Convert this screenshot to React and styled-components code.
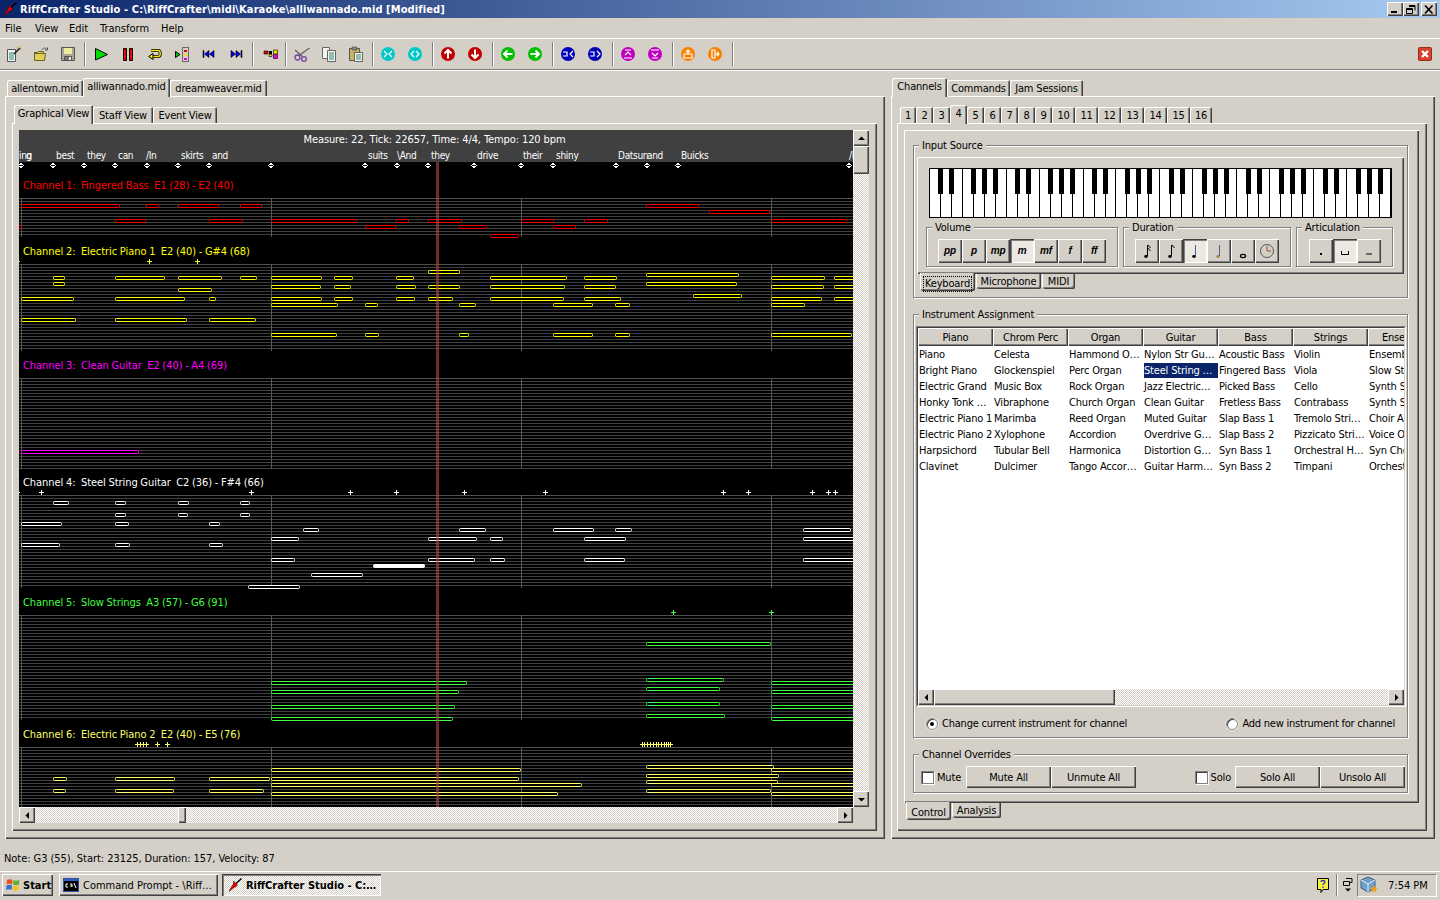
import React from "react";
import styled, { createGlobalStyle, css } from "styled-components";

const FACE = "#d4d0c8";
const UI_FONT = `"DejaVu Sans Condensed", "Liberation Sans", sans-serif`;

const GlobalStyle = createGlobalStyle`
  html, body { margin: 0; padding: 0; background: ${FACE}; overflow: hidden; }
  * { box-sizing: border-box; }
`;

const raised = css`
  background-color: ${FACE};
  box-shadow: inset 1px 1px 0 #fff, inset -1px -1px 0 #404040, inset -2px -2px 0 #808080;
`;
const dither = css`
  background-image: conic-gradient(#fff 25%, ${FACE} 0 50%, #fff 0 75%, ${FACE} 0);
  background-size: 2px 2px;
`;

const Screen = styled.div`
  width: 1440px;
  height: 900px;
  display: flex;
  flex-direction: column;
  background: ${FACE};
  color: #000;
  font: 11px/14px ${UI_FONT};
  letter-spacing: -0.18px;
  overflow: hidden;
`;

/* title bar */
const TitleBar = styled.div`
  height: 18px;
  flex: none;
  display: flex;
  align-items: center;
  padding: 0 3px 0 3px;
  background: linear-gradient(90deg, #0a246a, #a6caf0);
  color: #fff;
  font-weight: 700;
  letter-spacing: 0.1px;
`;
const TitleText = styled.span`
  margin-left: 3px;
  padding-top: 2px;
  flex: 1;
`;
const WinButtons = styled.div`
  display: flex;
`;
const WinButton = styled.div`
  ${raised}
  width: 16px;
  height: 14px;
  display: flex;
  align-items: center;
  justify-content: center;
  margin-left: ${(p) => p.$gap || 0}px;
`;

/* menu */
const MenuBar = styled.div`
  height: 20px;
  flex: none;
  display: flex;
  align-items: center;
  padding: 2px 0 0 5px;
  letter-spacing: 0;
`;
const MenuItem = styled.span`
  width: ${(p) => p.$w}px;
`;

/* toolbar */
const ToolBar = styled.div`
  height: 33px;
  flex: none;
  display: flex;
  align-items: center;
  border-top: 1px solid #fff;
  border-bottom: 1px solid #fff;
  box-shadow: inset 0 -1px 0 #808080;
  padding-bottom: 1px;
`;
const Tool = styled.div`
  width: 27px;
  height: 24px;
  display: flex;
  align-items: center;
  justify-content: center;
`;
const ToolSep = styled.div`
  width: 2px;
  height: 24px;
  border-left: 1px solid #808080;
  border-right: 1px solid #fff;
  margin: 0 ${(p) => p.$r}px 0 ${(p) => p.$l}px;
`;
const CloseTool = styled.div`
  margin-left: auto;
  margin-right: 8px;
  display: flex;
`;

/* tabs */
const Main = styled.div`
  flex: 1;
  display: flex;
  gap: 6px;
  padding: 7px 0 6px 5px;
  min-height: 0;
`;
const Column = styled.div`
  width: ${(p) => p.$w}px;
  display: flex;
  flex-direction: column;
`;
const TabStrip = styled.div`
  height: ${(p) => (p.$bottom ? 17 : 18)}px;
  display: flex;
  align-items: ${(p) => (p.$bottom ? "flex-start" : "flex-end")};
  padding-left: ${(p) => p.$pad}px;
  gap: ${(p) => p.$gap || 0}px;
  flex: none;
  position: relative;
  z-index: 2;
`;
const Tab = styled.div`
  width: ${(p) => p.$w}px;
  height: ${(p) => (p.$on ? 19 : 16)}px;
  margin-bottom: ${(p) => (p.$on ? -1 : 0)}px;
  display: flex;
  align-items: ${(p) => (p.$on ? "flex-start" : "center")};
  justify-content: center;
  padding-top: 2px;
  background: ${FACE};
  border-radius: 2px 2px 0 0;
  box-shadow: inset 1px 1px 0 #fff, inset -1px 0 0 #404040, inset -2px 0 0 #808080;
  white-space: nowrap;
`;
const BottomTab = styled.div`
  width: ${(p) => p.$w}px;
  height: ${(p) => (p.$on ? 18 : 15)}px;
  margin-top: ${(p) => (p.$on ? -1 : 0)}px;
  display: flex;
  align-items: center;
  justify-content: center;
  padding-top: ${(p) => (p.$on ? 4 : 1)}px;
  background: ${FACE};
  border-radius: 0 0 2px 2px;
  box-shadow: inset 1px 0 0 #fff, inset -1px -1px 0 #404040, inset -2px -2px 0 #808080;
`;
const FocusText = styled.span`
  outline: 1px dotted #000;
  padding: 0 1px;
`;
const Page = styled.div`
  ${raised}
  flex: 1;
  min-height: 0;
  display: flex;
  flex-direction: column;
  padding: ${(p) => p.$pad};
`;

/* piano roll */
const RollGrid = styled.div`
  display: grid;
  grid-template-columns: 834px 16px;
  grid-template-rows: 677px 16px;
`;
const Roll = styled.div`
  position: relative;
  background: #000;
  overflow: hidden;
`;
const RollHeader = styled.div`
  height: 32px;
  background: #404040;
  color: #fff;
`;
const RollTitle = styled.div`
  height: 18px;
  line-height: 20px;
  text-align: center;
  padding-right: 3px;
  letter-spacing: -0.1px;
`;
const LyricRow = styled.div`
  position: relative;
  height: 14px;
  font-size: 10px;
  letter-spacing: -0.3px;
`;
const Lyric = styled.span`
  position: absolute;
  left: ${(p) => p.$x - 19}px;
  top: 1px;
  white-space: pre;
`;
const ChannelLabel = styled.div`
  position: absolute;
  left: 4px;
  top: ${(p) => p.$y - 130 - 6}px;
  color: ${(p) => p.$color};
  white-space: pre;
  letter-spacing: -0.05px;
  word-spacing: -0.4px;
`;
const RollSvg = styled.svg`
  display: block;
`;

const ScrollV = styled.div`
  ${dither}
  display: flex;
  flex-direction: column;
`;
const ScrollH = styled.div`
  ${dither}
  display: flex;
  position: relative;
`;
const ScrollBtn = styled.div`
  ${raised}
  width: 16px;
  height: 16px;
  flex: none;
  display: flex;
  align-items: center;
  justify-content: center;
`;
const Track = styled.div`
  flex: 1;
`;
const ThumbV = styled.div`
  ${raised}
  width: 16px;
  height: 28px;
`;
const ThumbH = styled.div`
  ${raised}
  width: ${(p) => p.$w}px;
  height: 16px;
  margin-left: ${(p) => p.$x}px;
`;
const Corner = styled.div`
  background: ${FACE};
`;

/* group boxes */
const Group = styled.div`
  position: relative;
  border: 1px solid #808080;
  box-shadow: inset 1px 1px 0 #fff, 1px 1px 0 #fff;
  margin-top: ${(p) => p.$top || 0}px;
  height: ${(p) => p.$h}px;
  width: ${(p) => (p.$w ? p.$w + "px" : "auto")};
  padding: ${(p) => p.$pad || 0};
  flex: none;
`;
const Legend = styled.span`
  position: absolute;
  left: 5px;
  top: -7px;
  padding: 0 3px;
  background: ${FACE};
`;
const KeyPage = styled.div`
  ${raised}
  height: 117px;
  padding: 11px 0 0 9px;
`;
const KeyboardBox = styled.div`
  position: relative;
  width: 463px;
  height: 50px;
  margin-left: 3px;
  border: 1px solid #000;
  display: flex;
  background: #fff;
`;
const WhiteKey = styled.div`
  flex: 1;
  border-right: 1px solid #000;
  &:last-child { border-right: 0; }
`;
const BlackKey = styled.div`
  position: absolute;
  left: ${(p) => p.$i * 11 - 3}px;
  top: 0;
  width: 5px;
  height: 25px;
  background: #000;
`;
const KeyControls = styled.div`
  display: flex;
  gap: 5px;
  margin-top: 9px;
`;
const BtnRow = styled.div`
  display: flex;
`;
const KeyBtn = styled.div`
  ${raised}
  width: 24px;
  height: 24px;
  display: flex;
  align-items: center;
  justify-content: center;
  font: italic 700 10px/1 "Liberation Sans", sans-serif;
  ${(p) => p.$on && css`
    background: #ece9e3;
    box-shadow: inset 1px 1px 0 #404040, inset 2px 2px 0 #808080, inset -1px -1px 0 #fff;
  `}
`;

/* instrument list */
const ListBox = styled.div`
  height: 381px;
  border: 1px solid;
  border-color: #808080 #fff #fff #808080;
`;
const ListInner = styled.div`
  height: 100%;
  border: 1px solid;
  border-color: #404040 ${FACE} ${FACE} #404040;
  background: #fff;
  display: flex;
  flex-direction: column;
`;
const ListColumns = styled.div`
  flex: 1;
  display: flex;
  overflow: hidden;
`;
const ListColumn = styled.div`
  width: 75px;
  flex: none;
`;
const ListHead = styled.div`
  ${raised}
  height: 18px;
  line-height: 20px;
  text-align: center;
  white-space: nowrap;
  overflow: hidden;
`;
const ListCell = styled.div`
  height: 16px;
  line-height: 18px;
  padding-left: 1px;
  white-space: nowrap;
  overflow: hidden;
  ${(p) => p.$on && css`
    background: #0a246a;
    color: #fff;
    margin: 1px 0 0 1px;
    padding-left: 0;
    height: 15px;
    line-height: 16px;
  `}
`;
const ListScroll = styled.div`
  ${dither}
  display: flex;
  height: 16px;
  flex: none;
`;
const RadioRow = styled.div`
  display: flex;
  justify-content: space-between;
  padding: 10px 11px 0 10px;
  letter-spacing: -0.22px;
`;
const RadioLabel = styled.label`
  display: flex;
  align-items: center;
  gap: 4px;
`;
const Radio = styled.span`
  width: 12px;
  height: 12px;
  border-radius: 50%;
  background: #fff;
  border: 1px solid #808080;
  box-shadow: inset 1px 1px 0 #404040, 0 0 0 0.5px #fff;
  display: flex;
  align-items: center;
  justify-content: center;
  &::after {
    content: "";
    width: 4px;
    height: 4px;
    border-radius: 50%;
    background: ${(p) => (p.$on ? "#000" : "transparent")};
  }
`;
const OverrideRow = styled.div`
  display: flex;
  align-items: center;
  padding: 11px 2px 0 7px;
`;
const Check = styled.span`
  width: 13px;
  height: 13px;
  background: #fff;
  border: 1px solid #808080;
  box-shadow: inset 1px 1px 0 #404040, 1px 1px 0 #fff;
  margin-right: 3px;
  margin-left: ${(p) => (p.$push ? "auto" : "0")};
`;
const Label = styled.span`
  padding-top: 2px;
`;
const PushBtn = styled.div`
  ${raised}
  width: 85px;
  height: 22px;
  display: flex;
  align-items: center;
  justify-content: center;
  padding-top: 2px;
  margin-left: ${(p) => p.$ml || 0}px;
`;

/* status + taskbar */
const StatusBar = styled.div`
  height: 26px;
  flex: none;
  display: flex;
  align-items: center;
  padding: 2px 0 0 4px;
  letter-spacing: -0.05px;
`;
const TaskBar = styled.div`
  height: 29px;
  flex: none;
  border-top: 1px solid #fff;
  display: flex;
  align-items: flex-start;
  padding: 2px 3px 0 2px;
  letter-spacing: 0;
`;
const StartBtn = styled.div`
  ${raised}
  width: 51px;
  height: 22px;
  display: flex;
  align-items: center;
  gap: 2px;
  padding-left: 3px;
  font-weight: 700;
`;
const TaskBtn = styled.div`
  width: 159px;
  height: 22px;
  margin-left: ${(p) => p.$ml}px;
  display: flex;
  align-items: center;
  gap: 4px;
  padding-left: 4px;
  white-space: nowrap;
  ${(p) => (p.$on ? css`
    ${dither}
    box-shadow: inset 1px 1px 0 #404040, inset 2px 2px 0 #808080, inset -1px -1px 0 #fff;
    font-weight: 700;
    padding-left: 6px;
  ` : raised)}
`;
const Tray = styled.div`
  margin-left: auto;
  display: flex;
  align-items: center;
  height: 22px;
`;
const TraySep = styled.div`
  width: 2px;
  height: 22px;
  border-left: 1px solid #808080;
  border-right: 1px solid #fff;
  margin: 0 4px 0 5px;
`;
const Clock = styled.div`
  width: 80px;
  height: 23px;
  display: flex;
  align-items: center;
  margin: 0 0 0 3px;
  padding-left: 2px;
  gap: 10px;
  border: 1px solid;
  border-color: #808080 #fff #fff #808080;
`;

/* icons */
const Guitar = () => (
  <svg width="14" height="14" viewBox="0 0 14 14">
    <path d="M13.5 .5L8 5.5" stroke="#000" strokeWidth="1.4" />
    <path d="M5.5 3 L9.5 7 L8 8.5 L6 9.5 L1 13.5 L4 8 L5.5 6 Z" fill="#e00000" stroke="#500" strokeWidth="0.5" />
  </svg>
);
const Tri = ({ dir }) => {
  const d = { up: "M1 6 L4.5 2.5 L8 6Z", down: "M1 3 L4.5 6.5 L8 3Z", left: "M6 1 L2.5 4.5 L6 8Z", right: "M3 1 L6.5 4.5 L3 8Z" }[dir];
  return (
    <svg width="9" height="9" viewBox="0 0 9 9">
      <path d={d} fill="#000" />
    </svg>
  );
};
const Svg16 = ({ children }) => (
  <svg width="16" height="16" viewBox="0 0 16 16">
    {children}
  </svg>
);
const DocLines = () => <path d="M3 7h5M3 9h5M3 11h5M3 13h5" stroke="#2a8a7a" />;
const IconNew = () => (
  <Svg16>
    <path d="M1.5 3.5h8v12h-8z" fill="#f4f4ec" stroke="#555" />
    <DocLines />
    <path d="M8 8 L14 2" stroke="#222" strokeWidth="1.6" />
    <path d="M12 1h1M15 3v1M15 0v1M10 2h1" stroke="#e0a000" />
  </Svg16>
);
const IconOpen = () => (
  <Svg16>
    <path d="M1.5 6.5h3l1-1h5v2h-9z M1.5 7.5h11l-1 7h-10z" fill="#e0cf55" stroke="#6a6420" />
    <path d="M9 4 C10 1.5 13 1.5 14 3.5 M14.5 1.5 v2.5 h-2.5" fill="none" stroke="#555" />
  </Svg16>
);
const IconSave = () => (
  <Svg16>
    <path d="M1.5 1.5h13v13h-13z" fill="#a8a89a" stroke="#555" />
    <path d="M4 2h8v6H4z" fill="#ecec9c" />
    <path d="M4.5 10.5h7v4h-7z" fill="#777" stroke="#555" />
    <path d="M9 11h2v3H9z" fill="#eee" />
  </Svg16>
);
const IconPlay = () => (
  <Svg16>
    <path d="M2.5 2.5 L14.5 8.5 L2.5 14Z" fill="#00e000" stroke="#000" />
  </Svg16>
);
const IconPause = () => (
  <Svg16>
    <path d="M3.5 2.5h3v12h-3zM9.5 2.5h3v12h-3z" fill="#f00000" stroke="#000" />
  </Svg16>
);
const IconLoop = () => (
  <Svg16>
    <path d="M4 4.5h7c3 0 3 6 0 6H5" fill="none" stroke="#000" strokeWidth="3" />
    <path d="M4 4.5h7c3 0 3 6 0 6H5" fill="none" stroke="#f8e800" strokeWidth="1.4" />
    <path d="M6 7.5 L1.5 10.5 L6 13.5Z" fill="#f8e800" stroke="#000" />
  </Svg16>
);
const IconStep = () => (
  <Svg16>
    <path d="M1.5 5.5 L6 8.5 L1.5 11.5Z" fill="#00d000" stroke="#000" />
    <path d="M8.5 1.5h6v14h-6z" fill="none" stroke="#000" strokeDasharray="1 1" />
    <path d="M10 4h3v2h-3z" fill="#e00000" />
    <path d="M10 8h3v2h-3z" fill="#f0e000" />
    <path d="M10 12h3v2h-3z" fill="#e000e0" />
  </Svg16>
);
const IconRew = () => (
  <Svg16>
    <path d="M3 4.5v7H2v-7zM8 4.5v7L3.5 8zM13 4.5v7L8.5 8z" fill="#0000e0" stroke="#000" strokeWidth="0.6" />
  </Svg16>
);
const IconFwd = () => (
  <Svg16>
    <path d="M3 4.5v7L7.5 8zM8 4.5v7L12.5 8zM13 4.5v7h1v-7z" fill="#0000e0" stroke="#000" strokeWidth="0.6" />
  </Svg16>
);
const IconBlocks = () => (
  <Svg16>
    <path d="M1 5h4v3H1z" fill="#e00000" stroke="#000" strokeWidth="0.6" />
    <path d="M6 5h3v3H6z" fill="#000" />
    <path d="M10.5 4h4v4h-4z" fill="#f0e000" stroke="#000" strokeWidth="0.6" />
    <path d="M10.5 8.5h4v4h-4z" fill="#f000f0" stroke="#000" strokeWidth="0.6" />
    <path d="M6 8.5h3v2H6z" fill="#f0e000" stroke="#000" strokeWidth="0.6" />
  </Svg16>
);
const IconCut = () => (
  <Svg16>
    <path d="M15.5 2 L5 9.5 M1 4 L8.5 10.5" stroke="#606060" strokeWidth="1.2" />
    <circle cx="3.5" cy="11.5" r="2.5" fill="none" stroke="#7040a0" strokeWidth="1.3" />
    <circle cx="10" cy="13" r="2.3" fill="none" stroke="#7040a0" strokeWidth="1.3" />
  </Svg16>
);
const IconCopy = () => (
  <Svg16>
    <path d="M1.5 1.5h7v11h-7z" fill="#f4f4ec" stroke="#666" />
    <path d="M6.5 4.5h8v11h-8z" fill="#f4f4ec" stroke="#666" />
    <path d="M8 7h5M8 9h5M8 11h5M8 13h5" stroke="#2a8a7a" />
  </Svg16>
);
const IconPaste = () => (
  <Svg16>
    <path d="M1.5 2.5h10v12h-10z" fill="#c8b460" stroke="#555" />
    <path d="M4 1h5v3H4z" fill="#888" stroke="#444" strokeWidth="0.6" />
    <path d="M6.5 6.5h8v9h-8z" fill="#f4f4ec" stroke="#666" />
    <path d="M8 9h5M8 11h5M8 13h5" stroke="#2a8a7a" />
  </Svg16>
);
const IconClose = () => (
  <svg width="14" height="14" viewBox="0 0 14 14">
    <rect x="0.5" y="0.5" width="13" height="13" rx="1" fill="#d84030" stroke="#a02818" />
    <path d="M4 4 L10 10 M10 4 L4 10" stroke="#fff" strokeWidth="2.4" />
  </svg>
);
const Round = ({ color, d, w = 1.2 }) => (
  <svg width="14" height="14" viewBox="0 0 14 14">
    <circle cx="7" cy="7" r="7" fill={color} />
    <path d={d} fill="none" stroke="#fff" strokeWidth={w} />
  </svg>
);
const Note = ({ stem = "#000", flags = 0, open, head = "#000" }) => (
  <svg width="16" height="18" viewBox="0 0 16 18">
    {open ? (
      <ellipse cx="8" cy="14" rx="2.6" ry="1.6" fill="none" stroke="#000" strokeWidth="1.3" />
    ) : (
      <ellipse cx="7" cy="14.5" rx="1.8" ry="1.4" fill={head} />
    )}
    {stem !== "none" && <path d="M8.5 14V3" stroke={stem} />}
    {flags > 0 && <path d="M9 3 L11.5 6" stroke="#000" />}
    {flags > 1 && <path d="M9 6 L11.5 9" stroke="#000" />}
  </svg>
);
const IconClockFace = () => (
  <svg width="16" height="16" viewBox="0 0 16 16">
    <circle cx="8" cy="8" r="6.5" fill="none" stroke="#555" />
    <path d="M8 3v5h4" stroke="#a05030" fill="none" />
  </svg>
);
const WinFlag = () => (
  <svg width="16" height="16" viewBox="0 0 16 16">
    <path d="M2 3 Q5 1.5 7.5 3 L7 7.5 Q4.5 6 1.5 7.5Z" fill="#e85020" />
    <path d="M8.5 3 Q11 4.5 14.5 3 L14 7.5 Q11 9 8 7.5Z" fill="#60b030" />
    <path d="M1.5 8.5 Q4.5 7 7 8.5 L6.5 13 Q4 11.5 1 13Z" fill="#3070d0" />
    <path d="M8 8.5 Q11 10 14 8.5 L13.5 13 Q10.5 14.5 7.5 13Z" fill="#f8c020" />
  </svg>
);
const CmdIcon = () => (
  <svg width="16" height="14" viewBox="0 0 16 14">
    <rect x="0.5" y="0.5" width="15" height="13" fill="#000" stroke="#3050a0" />
    <path d="M1 1h14v2H1z" fill="#3060c0" />
    <path d="M3 6h2M3 9h2M3 6v3M7 6h2v3M7 8h2M11 5l2 5" stroke="#fff" fill="none" />
  </svg>
);
const HelpIcon = () => (
  <svg width="15" height="17" viewBox="0 0 15 17">
    <path d="M1.5 1.5h11v11H7l-2 3v-3H1.5z" fill="#f8f040" stroke="#000" />
    <path d="M5 5c0-2 4-2 4 0 0 1-2 1.5-2 3M7 9.5v1.5" fill="none" stroke="#3030c0" strokeWidth="1.3" />
  </svg>
);
const RestoreIcon = () => (
  <svg width="12" height="16" viewBox="0 0 12 16">
    <path d="M4 1.5h6v4H8M1.5 4.5h6v4h-6z" fill="none" stroke="#000" />
    <path d="M3 11.5h6L6 14.5Z" fill="#000" />
  </svg>
);
const CubeIcon = () => (
  <svg width="18" height="18" viewBox="0 0 18 18">
    <path d="M8 1l7 3v8l-7 4-7-4V4z" fill="#70a0c8" stroke="#406080" />
    <path d="M1 4l7 4 7-4M8 8v8" fill="none" stroke="#e0f0ff" />
    <path d="M14 9l1.2 2.6 2.6.3-2 1.8.6 2.7-2.4-1.4-2.4 1.4.6-2.7-2-1.8 2.6-.3z" fill="#f0a020" />
  </svg>
);

const toolGroups = [
  { l: 0, r: 0, tools: [<IconNew />, <IconOpen />, <IconSave />] },
  { l: 3, r: 1, tools: [<IconPlay />, <IconPause />, <IconLoop />, <IconStep />, <IconRew />, <IconFwd />] },
  { l: 3, r: 3, tools: [<IconBlocks />] },
  { l: 1, r: 1, tools: [<IconCut />, <IconCopy />, <IconPaste />] },
  { l: 3, r: 0, tools: [
    <Round color="#00c8c8" d="M3 4l3 3-3 3M11 4L8 7l3 3" />,
    <Round color="#00c8c8" d="M6 4L3 7l3 3M8 4l3 3-3 3" />,
  ] },
  { l: 4, r: 0, tools: [
    <Round color="#c00000" d="M7 11.5V3M3.5 6.5L7 3l3.5 3.5" w={2} />,
    <Round color="#c00000" d="M7 2.5V11M3.5 7.5L7 11l3.5-3.5" w={2} />,
  ] },
  { l: 4, r: 0, tools: [
    <Round color="#00c000" d="M11.5 7H3M6.5 3.5L3 7l3.5 3.5" w={2} />,
    <Round color="#00c000" d="M2.5 7H11M7.5 3.5L11 7l-3.5 3.5" w={2} />,
  ] },
  { l: 4, r: 0, tools: [
    <Round color="#0000b8" d="M2 5h4v4H2M12 4L9 7l3 3" />,
    <Round color="#0000b8" d="M2 5h4v4H2M9 4l3 3-3 3" />,
  ] },
  { l: 4, r: 0, tools: [
    <Round color="#c000c0" d="M4 3h6M4 8l3-3 3 3M3 11h8" />,
    <Round color="#c000c0" d="M3 3h8M4 6l3 3 3-3M4 11h6" />,
  ] },
  { l: 4, r: 0, tools: [
    <Round color="#f88000" d="M3 7h8v4H3zM7 7V3M5 5l2-2 2 2" />,
    <Round color="#f88000" d="M4 3h3v8H4zM7 7h4M9 5l2 2-2 2" />,
  ] },
];

const lyrics = [
  ["ing", 19], ["g", 26], ["best", 56], ["they", 87], ["can", 118], ["/In", 146], ["skirts", 181], ["and", 212],
  ["suits", 368], ["\\And", 397], ["they", 431], ["drive", 477], ["their", 523], ["shiny", 556],
  ["Datsun", 618], ["and", 647], ["Buicks", 681], ["/I", 849],
];
const diamonds = [21, 53, 84, 115, 147, 178, 209, 271, 365, 397, 428, 474, 521, 553, 616, 647, 678, 849];

const channels = [
  {
    label: "Channel 1:  Fingered Bass  E1 (28) - E2 (40)", y: 185, color: "#ff0000", top: 198, bottom: 237, marks: [],
    notes: [
      [204, 21, 119], [204, 146, 158], [204, 178, 218], [204, 240, 261], [204, 646, 698],
      [210, 709, 769],
      [219, 115, 145], [219, 209, 242], [219, 271, 356], [219, 396, 408], [219, 428, 461], [219, 521, 553], [219, 584, 607], [219, 771, 846],
      [225, 15, 21], [225, 365, 395], [225, 459, 486], [225, 553, 575],
      [234, 490, 518],
    ],
  },
  {
    label: "Channel 2:  Electric Piano 1  E2 (40) - G#4 (68)", y: 251, color: "#ffff00", top: 264, bottom: 351, marks: [17, 149, 197],
    notes: [
      [270, 428, 459],
      [273, 646, 738],
      [276, 53, 64], [276, 115, 164], [276, 178, 221], [276, 240, 256], [276, 271, 321], [276, 334, 352], [276, 396, 413],
      [276, 490, 566], [276, 584, 616], [276, 771, 824], [276, 834, 860],
      [282, 53, 64], [282, 646, 736],
      [285, 271, 320], [285, 334, 350], [285, 396, 415], [285, 428, 459], [285, 490, 564], [285, 584, 615], [285, 771, 823], [285, 834, 860],
      [288, 178, 211],
      [294, 693, 741],
      [297, 21, 73], [297, 115, 184], [297, 209, 215], [297, 271, 321], [297, 334, 352], [297, 396, 414], [297, 428, 452],
      [297, 490, 563], [297, 584, 620], [297, 771, 821], [297, 834, 860],
      [303, 271, 337], [303, 365, 377], [303, 459, 475], [303, 553, 592], [303, 615, 629], [303, 771, 804],
      [318, 21, 75], [318, 115, 186], [318, 209, 255],
      [333, 271, 336], [333, 365, 378], [333, 459, 468], [333, 553, 592], [333, 615, 629], [333, 771, 851],
    ],
  },
  {
    label: "Channel 3:  Clean Guitar  E2 (40) - A4 (69)", y: 365, color: "#ff00ff", top: 378, bottom: 469, marks: [],
    notes: [[450, 21, 138]],
  },
  {
    label: "Channel 4:  Steel String Guitar  C2 (36) - F#4 (66)", y: 482, color: "#ffffff", top: 495, bottom: 588,
    marks: [17, 41, 251, 350, 396, 464, 545, 723, 748, 812, 828, 835],
    notes: [
      [501, 53, 68], [501, 115, 125], [501, 178, 188], [501, 240, 249],
      [513, 115, 125], [513, 178, 187], [513, 240, 249],
      [522, 21, 61], [522, 115, 128], [522, 209, 219],
      [528, 303, 318], [528, 459, 485], [528, 553, 593], [528, 615, 631], [528, 803, 850],
      [537, 271, 298], [537, 428, 476], [537, 490, 502], [537, 584, 625], [537, 803, 860],
      [543, 21, 59], [543, 115, 129], [543, 209, 222],
      [558, 271, 294], [558, 428, 474], [558, 490, 504], [558, 584, 624], [558, 803, 860],
      [573, 311, 362],
      [585, 248, 299],
    ],
    solid: [[564, 373, 424]],
  },
  {
    label: "Channel 5:  Slow Strings  A3 (57) - G6 (91)", y: 602, color: "#40ff40", top: 615, bottom: 720, marks: [673, 771],
    notes: [
      [642, 646, 770],
      [678, 646, 723], [681, 271, 466], [681, 771, 860],
      [687, 646, 719], [690, 271, 458], [690, 771, 860],
      [702, 646, 719], [705, 271, 454], [705, 771, 860],
      [714, 646, 724], [717, 271, 452], [717, 771, 860],
    ],
  },
  {
    label: "Channel 6:  Electric Piano 2  E2 (40) - E5 (76)", y: 734, color: "#ffff66", top: 747, bottom: 807,
    marks: [137, 140, 143, 146, 157, 167, 642, 644, 647, 650, 653, 656, 658, 661, 664, 666, 668, 670],
    notes: [
      [765, 646, 773],
      [768, 271, 520], [768, 771, 860],
      [774, 646, 778],
      [777, 53, 66], [777, 115, 174], [777, 209, 269], [777, 271, 518],
      [780, 646, 777],
      [783, 271, 581], [783, 771, 860],
      [789, 53, 65], [789, 115, 173], [789, 209, 263], [789, 646, 770],
      [792, 271, 557], [792, 771, 860],
    ],
  },
];

const range = (a, b, step) => {
  const out = [];
  for (let v = a; v < b; v += step) out.push(v);
  return out;
};

const PianoRollDrawing = () => (
  <RollSvg width="834" height="645" viewBox="19 162 834 645" shapeRendering="crispEdges">
    {diamonds.map((x) => (
      <path key={x} d={`M${x} 163.5 L${x + 2.5} 165.5 L${x} 167.5 L${x - 2.5} 165.5Z`} fill="#000" stroke="#fff" />
    ))}
    {channels.map((ch) => (
      <g key={ch.y}>
        {range(ch.top, ch.bottom, 3).map((y) => (
          <path key={y} d={`M19 ${y + 0.5}H853`} stroke={y === ch.top ? "#505050" : "#404040"} />
        ))}
        {[21, 271, 521, 771].map((x) => (
          <path key={x} d={`M${x + 0.5} ${ch.top}V${ch.bottom}`} stroke="#585858" />
        ))}
        {ch.notes.map(([y, a, b]) => (
          <rect key={`${y}-${a}`} x={a + 0.5} y={y + 0.5} width={b - a} height={3} rx="1" fill="#000" stroke={ch.color} shapeRendering="auto" />
        ))}
        {(ch.solid || []).map(([y, a, b]) => (
          <rect key={a} x={a + 0.5} y={y + 0.5} width={b - a} height={3} rx="1" fill={ch.color} stroke={ch.color} shapeRendering="auto" />
        ))}
        {ch.marks.map((x) => (
          <path key={x} d={`M${x - 2} ${ch.top - 2.5}H${x + 3}M${x + 0.5} ${ch.top - 5}V${ch.top}`} stroke={ch.color} />
        ))}
      </g>
    ))}
    <rect x="436" y="162" width="3" height="645" fill="#b04848" opacity="0.62" />
  </RollSvg>
);

const fileTabs = [["allentown.mid", 76], ["alliwannado.mid", 87, true], ["dreamweaver.mid", 97]];
const viewTabs = [["Graphical View", 79, true], ["Staff View", 60], ["Event View", 64]];
const rightTabs = [["Channels", 55, true], ["Commands", 63], ["Jam Sessions", 73]];
const channelTabs = [
  ["1", 16], ["2", 17], ["3", 17], ["4", 17, true], ["5", 17], ["6", 17], ["7", 17], ["8", 17], ["9", 17],
  ["10", 23], ["11", 23], ["12", 23], ["13", 23], ["14", 23], ["15", 23], ["16", 22],
];

const instruments = [
  ["Piano", ["Piano", "Bright Piano", "Electric Grand", "Honky Tonk …", "Electric Piano 1", "Electric Piano 2", "Harpsichord", "Clavinet"]],
  ["Chrom Perc", ["Celesta", "Glockenspiel", "Music Box", "Vibraphone", "Marimba", "Xylophone", "Tubular Bell", "Dulcimer"]],
  ["Organ", ["Hammond O…", "Perc Organ", "Rock Organ", "Church Organ", "Reed Organ", "Accordion", "Harmonica", "Tango Accor…"]],
  ["Guitar", ["Nylon Str Gu…", "Steel String …", "Jazz Electric…", "Clean Guitar", "Muted Guitar", "Overdrive G…", "Distortion G…", "Guitar Harm…"]],
  ["Bass", ["Acoustic Bass", "Fingered Bass", "Picked Bass", "Fretless Bass", "Slap Bass 1", "Slap Bass 2", "Syn Bass 1", "Syn Bass 2"]],
  ["Strings", ["Violin", "Viola", "Cello", "Contrabass", "Tremolo Stri…", "Pizzicato Stri…", "Orchestral H…", "Timpani"]],
  ["Ensemble", ["Ensemble", "Slow Strings", "Synth Strings", "Synth Strings", "Choir Aahs", "Voice Oohs", "Syn Choir", "Orchestra Hit"]],
];

const blackKeys = range(1, 42, 1).filter((i) => i % 7 !== 0 && i % 7 !== 3);

export default function App() {
  return (
    <Screen>
      <GlobalStyle />
      <TitleBar>
        <Guitar />
        <TitleText>RiffCrafter Studio - C:\RiffCrafter\midi\Karaoke\alliwannado.mid [Modified]</TitleText>
        <WinButtons>
          <WinButton>
            <svg width="10" height="8" viewBox="0 0 10 8"><path d="M1 6h6v2H1z" fill="#000" /></svg>
          </WinButton>
          <WinButton>
            <svg width="10" height="9" viewBox="0 0 10 9"><path d="M3 .5h6v5M3 1.5h6M.5 3.5h6v5h-6zM.5 4.5h6" fill="none" stroke="#000" /></svg>
          </WinButton>
          <WinButton $gap={2}>
            <svg width="10" height="9" viewBox="0 0 10 9"><path d="M1 0.5L8.5 8.5M8.5 .5L1 8.5" stroke="#000" strokeWidth="1.6" /></svg>
          </WinButton>
        </WinButtons>
      </TitleBar>

      <MenuBar>
        <MenuItem $w={30}>File</MenuItem>
        <MenuItem $w={34}>View</MenuItem>
        <MenuItem $w={31}>Edit</MenuItem>
        <MenuItem $w={61}>Transform</MenuItem>
        <MenuItem $w={30}>Help</MenuItem>
      </MenuBar>

      <ToolBar>
        {toolGroups.map((g, i) => (
          <React.Fragment key={i}>
            {g.tools.map((t, j) => (
              <Tool key={j}>{t}</Tool>
            ))}
            <ToolSep $l={toolGroups[i + 1] ? toolGroups[i + 1].l : 4} $r={toolGroups[i + 1] ? toolGroups[i + 1].r : 0} />
          </React.Fragment>
        ))}
        <CloseTool>
          <IconClose />
        </CloseTool>
      </ToolBar>

      <Main>
        <Column $w={880}>
          <TabStrip $pad={2}>
            {fileTabs.map(([t, w, on]) => (
              <Tab key={t} $w={w} $on={on}>{t}</Tab>
            ))}
          </TabStrip>
          <Page $pad="9px 8px 8px 7px">
            <TabStrip $pad={2}>
              {viewTabs.map(([t, w, on]) => (
                <Tab key={t} $w={w} $on={on}>{t}</Tab>
              ))}
            </TabStrip>
            <Page $pad="7px 8px 8px 7px">
              <RollGrid>
                <Roll>
                  <RollHeader>
                    <RollTitle>Measure: 22, Tick: 22657, Time: 4/4, Tempo: 120 bpm</RollTitle>
                    <LyricRow>
                      {lyrics.map(([t, x]) => (
                        <Lyric key={t + x} $x={x}>{t}</Lyric>
                      ))}
                    </LyricRow>
                  </RollHeader>
                  <PianoRollDrawing />
                  {channels.map((ch) => (
                    <ChannelLabel key={ch.y} $y={ch.y} $color={ch.color}>{ch.label}</ChannelLabel>
                  ))}
                </Roll>
                <ScrollV>
                  <ScrollBtn><Tri dir="up" /></ScrollBtn>
                  <ThumbV />
                  <Track />
                  <ScrollBtn><Tri dir="down" /></ScrollBtn>
                </ScrollV>
                <ScrollH>
                  <ScrollBtn><Tri dir="left" /></ScrollBtn>
                  <ThumbH $x={143} $w={8} />
                  <Track />
                  <ScrollBtn><Tri dir="right" /></ScrollBtn>
                </ScrollH>
                <Corner />
              </RollGrid>
            </Page>
          </Page>
        </Column>

        <Column $w={544}>
          <TabStrip $pad={1}>
            {rightTabs.map(([t, w, on]) => (
              <Tab key={t} $w={w} $on={on}>{t}</Tab>
            ))}
          </TabStrip>
          <Page $pad="9px 8px 8px 6px">
            <TabStrip $pad={3}>
              {channelTabs.map(([t, w, on]) => (
                <Tab key={t} $w={w} $on={on}>{t}</Tab>
              ))}
            </TabStrip>
            <Page $pad="7px 8px 11px 7px">
              <Page $pad="15px 11px 0 9px">
                <Group $h={153} $pad="11px 3px 0 3px">
                  <Legend>Input Source</Legend>
                  <KeyPage>
                    <KeyboardBox>
                      {range(0, 42, 1).map((i) => (
                        <WhiteKey key={i} />
                      ))}
                      {blackKeys.map((i) => (
                        <BlackKey key={i} $i={i} />
                      ))}
                    </KeyboardBox>
                    <KeyControls>
                      <Group $w={192} $h={40} $pad="11px 0 0 11px">
                        <Legend>Volume</Legend>
                        <BtnRow>
                          {["pp", "p", "mp", "m", "mf", "f", "ff"].map((v) => (
                            <KeyBtn key={v} $on={v === "m"}>{v}</KeyBtn>
                          ))}
                        </BtnRow>
                      </Group>
                      <Group $w={168} $h={40} $pad="11px 0 0 11px">
                        <Legend>Duration</Legend>
                        <BtnRow>
                          <KeyBtn><Note flags={2} /></KeyBtn>
                          <KeyBtn><Note flags={1} /></KeyBtn>
                          <KeyBtn $on><Note stem="#4060a0" /></KeyBtn>
                          <KeyBtn><Note stem="#4060a0" head="#a09040" /></KeyBtn>
                          <KeyBtn><Note stem="none" open /></KeyBtn>
                          <KeyBtn><IconClockFace /></KeyBtn>
                        </BtnRow>
                      </Group>
                      <Group $w={97} $h={40} $pad="11px 0 0 12px">
                        <Legend>Articulation</Legend>
                        <BtnRow>
                          <KeyBtn>
                            <svg width="8" height="10" viewBox="0 0 8 10"><path d="M3 7h2v2H3z" fill="#000" /></svg>
                          </KeyBtn>
                          <KeyBtn $on>
                            <svg width="8" height="10" viewBox="0 0 8 10"><path d="M.5 5v3.5h7V5" fill="none" stroke="#000" /></svg>
                          </KeyBtn>
                          <KeyBtn>
                            <svg width="8" height="10" viewBox="0 0 8 10"><path d="M1 8h6" stroke="#000" /></svg>
                          </KeyBtn>
                        </BtnRow>
                      </Group>
                    </KeyControls>
                  </KeyPage>
                  <TabStrip $bottom $pad={3} $gap={1}>
                    <BottomTab $w={55} $on><FocusText>Keyboard</FocusText></BottomTab>
                    <BottomTab $w={65}>Microphone</BottomTab>
                    <BottomTab $w={33}>MIDI</BottomTab>
                  </TabStrip>
                </Group>

                <Group $top={16} $h={424} $pad="11px 1px 0 2px">
                  <Legend>Instrument Assignment</Legend>
                  <ListBox>
                    <ListInner>
                      <ListColumns>
                        {instruments.map(([head, cells]) => (
                          <ListColumn key={head}>
                            <ListHead>{head}</ListHead>
                            {cells.map((c) => (
                              <ListCell key={c} $on={c === "Steel String …"}>{c}</ListCell>
                            ))}
                          </ListColumn>
                        ))}
                      </ListColumns>
                      <ListScroll>
                        <ScrollBtn><Tri dir="left" /></ScrollBtn>
                        <ThumbH $x={0} $w={181} />
                        <Track />
                        <ScrollBtn><Tri dir="right" /></ScrollBtn>
                      </ListScroll>
                    </ListInner>
                  </ListBox>
                  <RadioRow>
                    <RadioLabel><Radio $on />Change current instrument for channel</RadioLabel>
                    <RadioLabel><Radio />Add new instrument for channel</RadioLabel>
                  </RadioRow>
                </Group>

                <Group $top={16} $h={39}>
                  <Legend>Channel Overrides</Legend>
                  <OverrideRow>
                    <Check />
                    <Label>Mute</Label>
                    <PushBtn $ml={5}>Mute All</PushBtn>
                    <PushBtn>Unmute All</PushBtn>
                    <Check $push />
                    <Label>Solo</Label>
                    <PushBtn $ml={4}>Solo All</PushBtn>
                    <PushBtn>Unsolo All</PushBtn>
                  </OverrideRow>
                </Group>
              </Page>
              <TabStrip $bottom $pad={2} $gap={1}>
                <BottomTab $w={45} $on>Control</BottomTab>
                <BottomTab $w={49}>Analysis</BottomTab>
              </TabStrip>
            </Page>
          </Page>
        </Column>
      </Main>

      <StatusBar>Note: G3 (55), Start: 23125, Duration: 157, Velocity: 87</StatusBar>

      <TaskBar>
        <StartBtn><WinFlag /><Label>Start</Label></StartBtn>
        <TaskBtn $ml={6}><CmdIcon /><Label>Command Prompt - \Riff…</Label></TaskBtn>
        <TaskBtn $ml={4} $on><Guitar /><Label>RiffCrafter Studio - C:…</Label></TaskBtn>
        <Tray>
          <HelpIcon />
          <TraySep />
          <RestoreIcon />
          <Clock>
            <CubeIcon />
            <Label>7:54 PM</Label>
          </Clock>
        </Tray>
      </TaskBar>
    </Screen>
  );
}
